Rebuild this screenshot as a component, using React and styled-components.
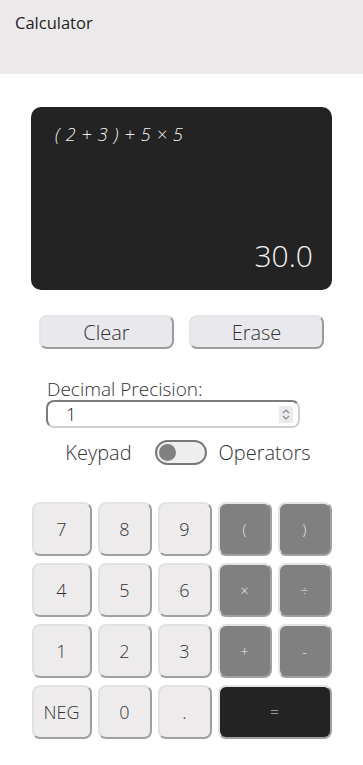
import React, { useState } from 'react';
import styled, { createGlobalStyle } from 'styled-components';

const GlobalStyle = createGlobalStyle`
    body {
        margin: 0;
        background: #ffffff;
        font-family: 'Open Sans', 'Noto Sans', sans-serif;
        color: #2a2a2a;
    }
`;

const Page = styled.div`
    width: 363px;
    min-height: 765px;
    display: flex;
    flex-direction: column;
`;

const Header = styled.header`
    height: 74px;
    box-sizing: border-box;
    padding: 11px 15px;
    background: #ebe9ea;
    font-size: 16.5px;
    font-weight: 500;
    color: #1f1f1f;
`;

const Body = styled.main`
    display: flex;
    flex-direction: column;
    align-items: center;
    padding-top: 33px;
`;

const Display = styled.div`
    width: 301px;
    height: 183px;
    box-sizing: border-box;
    border-radius: 10px;
    background: #232323;
    color: #f2f2f2;
    display: flex;
    flex-direction: column;
    justify-content: space-between;
    padding: 15px 19px 14px 24px;
`;

const Expression = styled.div`
    font-style: italic;
    font-weight: 300;
    font-size: 18px;
    letter-spacing: 6px;
`;

const Result = styled.div`
    align-self: flex-end;
    font-size: 30px;
    font-weight: 300;
`;

const ActionRow = styled.div`
    display: flex;
    gap: 15px;
    margin-top: 25px;
`;

const ActionButton = styled.button`
    width: 135px;
    height: 34px;
    border-radius: 8px;
    border: 2px solid;
    border-color: #e4e4e6 #9c9c9c #9c9c9c #e4e4e6;
    background: #e9e8ec;
    font-family: inherit;
    font-size: 20px;
    font-weight: 300;
    color: #333;
    padding: 0;
`;

const Precision = styled.div`
    display: flex;
    flex-direction: column;
    width: 254px;
    margin-top: 30px;
    margin-right: 17px;
`;

const Label = styled.label`
    font-size: 19px;
    font-weight: 300;
    color: #333;
    padding-left: 1px;
    line-height: 21px;
`;

const InputBox = styled.div`
    display: flex;
    align-items: center;
    height: 28px;
    box-sizing: border-box;
    border: 2px solid;
    border-color: #7c7c7c #cfcfcf #cfcfcf #7c7c7c;
    border-radius: 8px;
    padding: 0 5px 0 18px;
`;

const NumberInput = styled.input`
    flex: 1;
    border: none;
    outline: none;
    background: transparent;
    font-family: inherit;
    font-size: 18px;
    font-weight: 300;
    color: #222;
    padding: 0;
    min-width: 0;
`;

const Spinner = styled.svg`
    width: 14px;
    height: 17px;
    background: #ebebef;
`;

const ToggleRow = styled.div`
    display: flex;
    align-items: center;
    margin-top: 12px;
    margin-left: 13px;
    font-size: 20px;
    line-height: 24px;
    font-weight: 300;
    color: #333;
`;

const Track = styled.button`
    width: 52px;
    height: 25px;
    box-sizing: border-box;
    border: 2px solid #787878;
    border-radius: 13px;
    background: #eeeeee;
    padding: 0 2px;
    display: flex;
    align-items: center;
    justify-content: ${p => (p.on ? 'flex-end' : 'flex-start')};
    margin: 0 12px 0 23px;
`;

const Knob = styled.span`
    width: 17px;
    height: 17px;
    border-radius: 50%;
    background: #808080;
`;

const Keys = styled.div`
    display: grid;
    grid-template-columns: 60px repeat(4, 54px);
    grid-auto-rows: 54px;
    column-gap: 6px;
    row-gap: 7px;
    margin-top: 37px;
`;

const kinds = {
    digit: { bg: '#edebec', color: '#333', size: '18px' },
    op: { bg: '#808080', color: '#e8e8e8', size: '14px' },
    equals: { bg: '#232323', color: '#f0f0f0', size: '16px' },
};

const Key = styled.button`
    grid-column: span ${p => p.span || 1};
    border-radius: 8px;
    border: 2px solid;
    border-color: #e2e2e2 #a0a0a0 #a0a0a0 #e2e2e2;
    background: ${p => kinds[p.kind].bg};
    color: ${p => kinds[p.kind].color};
    font-family: inherit;
    font-size: ${p => kinds[p.kind].size};
    font-weight: 300;
    padding: 0;
`;

const keys = [
    ['7', 'digit'], ['8', 'digit'], ['9', 'digit'], ['(', 'op'], [')', 'op'],
    ['4', 'digit'], ['5', 'digit'], ['6', 'digit'], ['×', 'op'], ['÷', 'op'],
    ['1', 'digit'], ['2', 'digit'], ['3', 'digit'], ['+', 'op'], ['-', 'op'],
    ['NEG', 'digit'], ['0', 'digit'], ['.', 'digit'], ['=', 'equals', 2],
];

export default function App() {
    const [precision, setPrecision] = useState('1');
    const [operators, setOperators] = useState(false);

    return (
        <Page>
            <GlobalStyle />
            <Header>Calculator</Header>
            <Body>
                <Display>
                    <Expression>(2+3)+5×5</Expression>
                    <Result>30.0</Result>
                </Display>
                <ActionRow>
                    <ActionButton>Clear</ActionButton>
                    <ActionButton>Erase</ActionButton>
                </ActionRow>
                <Precision>
                    <Label>Decimal Precision:</Label>
                    <InputBox>
                        <NumberInput value={precision} onChange={e => setPrecision(e.target.value)} />
                        <Spinner viewBox="0 0 14 17">
                            <path d="M4 7 L7 4 L10 7" fill="none" stroke="#8a8a8a" strokeWidth="1.2" />
                            <path d="M4 10 L7 13 L10 10" fill="none" stroke="#8a8a8a" strokeWidth="1.2" />
                        </Spinner>
                    </InputBox>
                </Precision>
                <ToggleRow>
                    <span>Keypad</span>
                    <Track on={operators ? 1 : 0} onClick={() => setOperators(!operators)}>
                        <Knob />
                    </Track>
                    <span>Operators</span>
                </ToggleRow>
                <Keys>
                    {keys.map(([label, kind, span]) => (
                        <Key key={label} kind={kind} span={span}>{label}</Key>
                    ))}
                </Keys>
            </Body>
        </Page>
    );
}
